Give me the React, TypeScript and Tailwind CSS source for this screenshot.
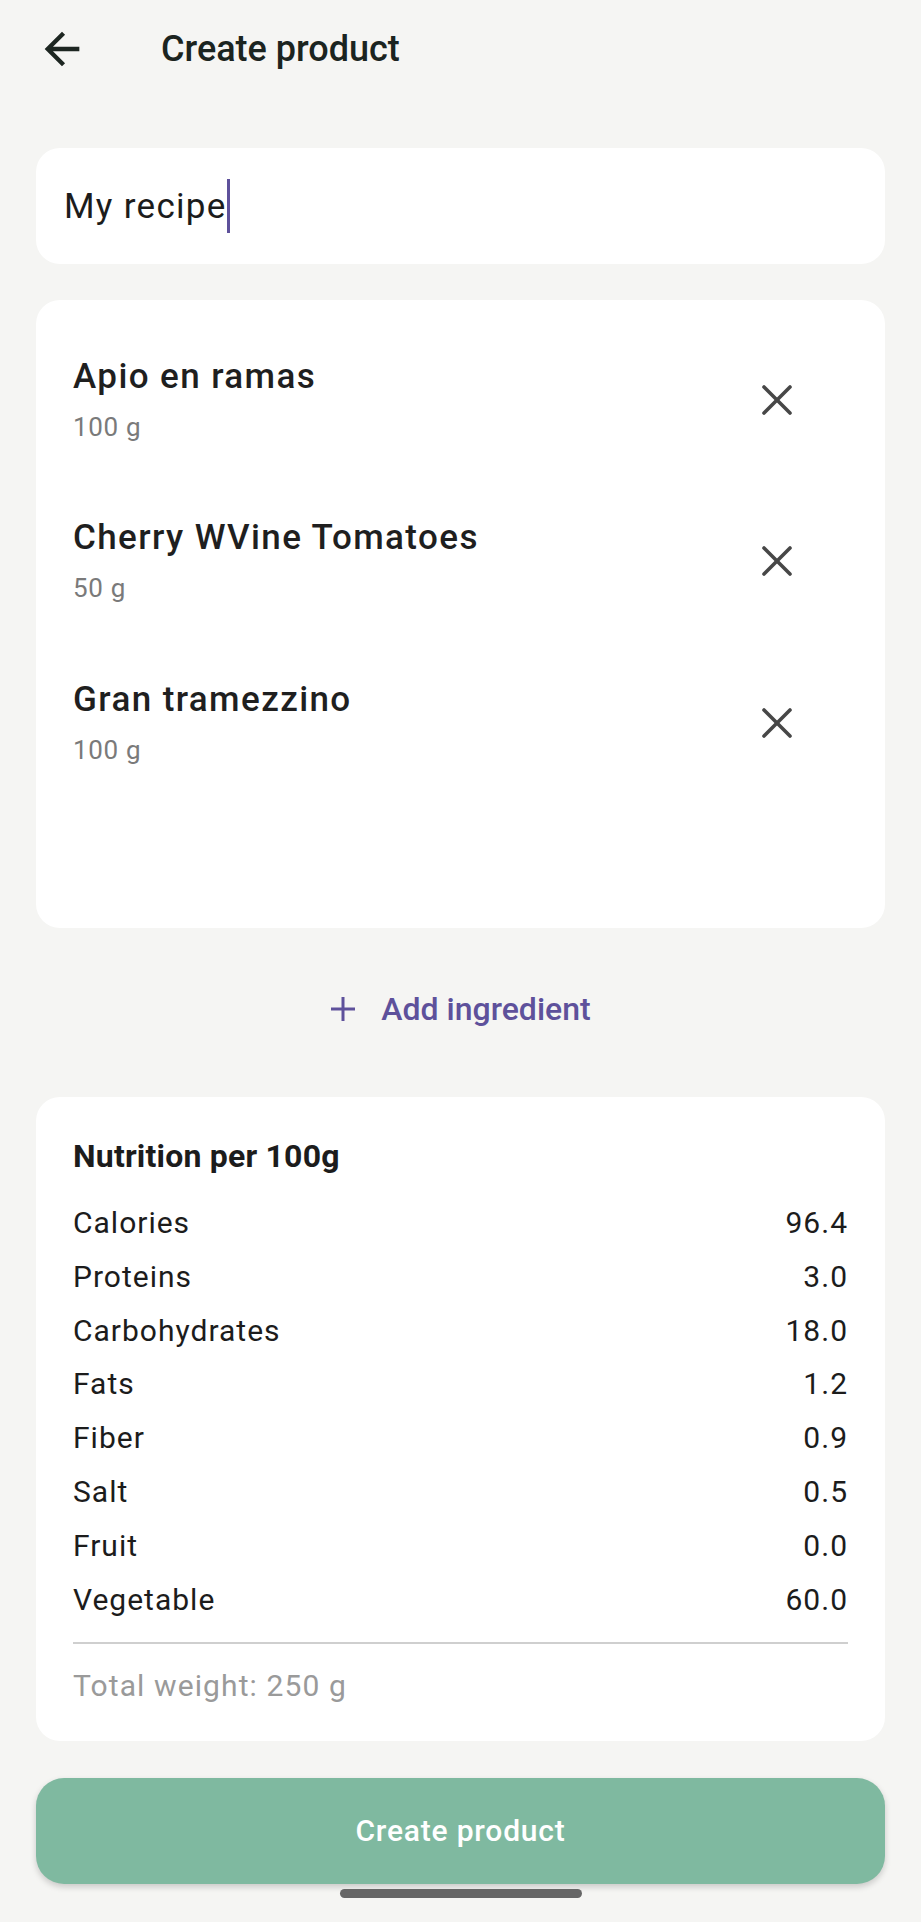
const ingredients = [
  { id: 1, name: "Apio en ramas", weight: "100 g" },
  { id: 2, name: "Cherry WVine Tomatoes", weight: "50 g" },
  { id: 3, name: "Gran tramezzino", weight: "100 g" },
];

const nutrition = [
  { label: "Calories", value: "96.4" },
  { label: "Proteins", value: "3.0" },
  { label: "Carbohydrates", value: "18.0" },
  { label: "Fats", value: "1.2" },
  { label: "Fiber", value: "0.9" },
  { label: "Salt", value: "0.5" },
  { label: "Fruit", value: "0.0" },
  { label: "Vegetable", value: "60.0" },
];

function BackArrow() {
  return (
    <svg viewBox="0 0 24 24" className="w-[52px] h-[52px] shrink-0" fill="#1d2621">
      <path d="M20 11H7.83l5.59-5.59L12 4l-8 8 8 8 1.41-1.41L7.83 13H20v-2z" />
    </svg>
  );
}

function CloseIcon() {
  return (
    <svg viewBox="0 0 30 30" className="w-[30px] h-[30px] shrink-0" fill="none" stroke="#474747" strokeWidth={3.6} strokeLinecap="round">
      <line x1="2" y1="2" x2="28" y2="28" />
      <line x1="28" y1="2" x2="2" y2="28" />
    </svg>
  );
}

function PlusIcon() {
  return (
    <svg viewBox="0 0 26 26" className="w-[26px] h-[26px] shrink-0" fill="none" stroke="#5e519b" strokeWidth={3}>
      <line x1="13" y1="1" x2="13" y2="25" />
      <line x1="1" y1="13" x2="25" y2="13" />
    </svg>
  );
}

export default function App() {
  return (
    <div className="min-h-screen bg-[#f5f5f3] font-[Roboto,sans-serif] px-[36px] pb-[22px]">
      {/* App bar */}
      <div className="flex items-center h-[98px]">
        <BackArrow />
        <span className="ml-[73px] text-[36px] font-medium leading-none text-[#1b2420]">Create product</span>
      </div>

      {/* Recipe name */}
      <div className="mt-[50px] h-[116px] rounded-[24px] bg-white flex items-center pl-[28px]">
        <span className="text-[35px] leading-none tracking-[1.3px] text-[#1c1c1c]">My recipe</span>
        <span className="w-[3px] h-[54px] bg-[#5e519b]" />
      </div>

      {/* Ingredients */}
      <div className="mt-[36px] h-[628px] rounded-[24px] bg-white pt-[19px]">
        {ingredients.map((item) => (
          <div key={item.id} className="h-[161.5px] flex items-center justify-between pl-[37px] pr-[93px]">
            <div className="flex flex-col">
              <span className="text-[35px] font-medium leading-[42px] tracking-[1.4px] text-[#1f1f1f]">{item.name}</span>
              <span className="mt-[12px] text-[26px] leading-[34px] tracking-[0.7px] text-[#7a7a7a]">{item.weight}</span>
            </div>
            <CloseIcon />
          </div>
        ))}
      </div>

      {/* Add ingredient */}
      <div className="mt-[49px] h-[64px] flex items-center justify-center gap-[25px]">
        <PlusIcon />
        <span className="text-[32px] font-medium leading-none tracking-[0px] text-[#5e519b]">Add ingredient</span>
      </div>

      {/* Nutrition */}
      <div className="mt-[56px] rounded-[24px] bg-white pt-[39px] pb-[35px] pl-[37px] pr-[37px]">
        <div className="text-[32px] font-bold leading-[40px] tracking-[0.2px] text-[#1c1c1c]">Nutrition per 100g</div>
        <div className="mt-[20px] flex flex-col">
          {nutrition.map((row) => (
            <div key={row.label} className="h-[53.8px] flex items-center justify-between text-[30px] leading-[53.8px] tracking-[1px] text-[#1c1c1c]">
              <span>{row.label}</span>
              <span>{row.value}</span>
            </div>
          ))}
        </div>
        <div className="mt-[16px] h-[2px] bg-[#cfcfcf]" />
        <div className="mt-[22px] text-[30px] leading-[40px] tracking-[1.1px] text-[#9a9a9a]">Total weight: 250 g</div>
      </div>

      {/* Submit */}
      <button className="mt-[37px] w-full h-[106px] rounded-[28px] bg-[#7fb9a0] shadow-[0_3px_6px_rgba(0,0,0,0.18)] flex items-center justify-center">
        <span className="text-[30px] font-medium leading-none tracking-[0.8px] text-white">Create product</span>
      </button>

      <div className="mt-[5px] mx-auto w-[242px] h-[9px] rounded-full bg-[#666666]" />
    </div>
  );
}
